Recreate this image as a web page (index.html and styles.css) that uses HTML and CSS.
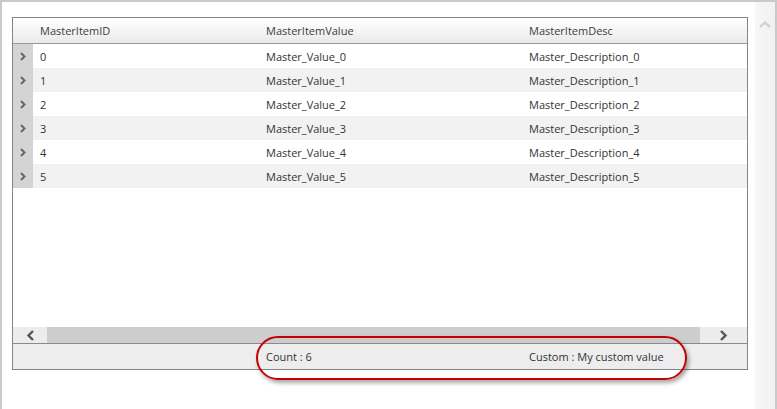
FILE: index.html
```html
<!DOCTYPE html>
<html lang="en">
<head>
    <meta charset="UTF-8">
    <title>Master Grid</title>
    <link rel="stylesheet" href="styles.css">
</head>
<body>
    <div class="window">
        <div class="content">
            <div class="grid">
                <div class="grid-header">
                    <div class="row-head"></div>
                    <div class="cell">MasterItemID</div>
                    <div class="cell">MasterItemValue</div>
                    <div class="cell">MasterItemDesc</div>
                </div>

                <div class="rows">
                    <div class="row">
                        <div class="row-head"><svg width="6" height="9" viewBox="0 0 6 9"><polyline points="1,1 4.5,4.5 1,8" /></svg></div>
                        <div class="cell">0</div>
                        <div class="cell">Master_Value_0</div>
                        <div class="cell">Master_Description_0</div>
                    </div>
                    <div class="row alt">
                        <div class="row-head"><svg width="6" height="9" viewBox="0 0 6 9"><polyline points="1,1 4.5,4.5 1,8" /></svg></div>
                        <div class="cell">1</div>
                        <div class="cell">Master_Value_1</div>
                        <div class="cell">Master_Description_1</div>
                    </div>
                    <div class="row">
                        <div class="row-head"><svg width="6" height="9" viewBox="0 0 6 9"><polyline points="1,1 4.5,4.5 1,8" /></svg></div>
                        <div class="cell">2</div>
                        <div class="cell">Master_Value_2</div>
                        <div class="cell">Master_Description_2</div>
                    </div>
                    <div class="row alt">
                        <div class="row-head"><svg width="6" height="9" viewBox="0 0 6 9"><polyline points="1,1 4.5,4.5 1,8" /></svg></div>
                        <div class="cell">3</div>
                        <div class="cell">Master_Value_3</div>
                        <div class="cell">Master_Description_3</div>
                    </div>
                    <div class="row">
                        <div class="row-head"><svg width="6" height="9" viewBox="0 0 6 9"><polyline points="1,1 4.5,4.5 1,8" /></svg></div>
                        <div class="cell">4</div>
                        <div class="cell">Master_Value_4</div>
                        <div class="cell">Master_Description_4</div>
                    </div>
                    <div class="row alt">
                        <div class="row-head"><svg width="6" height="9" viewBox="0 0 6 9"><polyline points="1,1 4.5,4.5 1,8" /></svg></div>
                        <div class="cell">5</div>
                        <div class="cell">Master_Value_5</div>
                        <div class="cell">Master_Description_5</div>
                    </div>
                </div>

                <div class="hscroll">
                    <div class="hs-btn left"><svg width="9" height="11" viewBox="0 0 9 11"><polyline points="7,1 2.5,5.5 7,10" /></svg></div>
                    <div class="hs-thumb"></div>
                    <div class="hs-btn right"><svg width="9" height="11" viewBox="0 0 9 11"><polyline points="2,1 6.5,5.5 2,10" /></svg></div>
                </div>

                <div class="grid-footer">
                    <div class="row-head"></div>
                    <div class="cell"></div>
                    <div class="cell">Count : 6</div>
                    <div class="cell">Custom : My custom value</div>
                </div>
            </div>

            <!-- highlight around the footer aggregates -->
            <div class="callout"></div>
        </div>

        <div class="vscroll">
            <svg width="14" height="9" viewBox="0 0 14 9"><polyline points="2,7 7,2.5 12,7" /></svg>
        </div>
    </div>
</body>
</html>
```

FILE: styles.css
```css
* {
    margin: 0;
    padding: 0;
    box-sizing: border-box;
}

body {
    font-family: "Open Sans", "Noto Sans", sans-serif;
    font-size: 11px;
    color: #333;
    background: #fff;
    width: 777px;
    height: 409px;
    overflow: hidden;
}

.window {
    display: flex;
    height: 409px;
    border-top: 2px solid #c9c9c9;
    border-left: 2px solid #c9c9c9;
    border-right: 2px solid #c9c9c9;
}

.content {
    position: relative;
    flex: 1;
    padding: 15px 7px 0 10px;
}

.grid {
    width: 736px;
    height: 353px;
    border: 1px solid #858585;
    display: flex;
    flex-direction: column;
    background: #fff;
}

.grid-header,
.row,
.grid-footer {
    display: grid;
    grid-template-columns: 20px 226px 263px 1fr;
    align-items: center;
}

.cell {
    padding-left: 7px;
    white-space: nowrap;
}

.grid-header {
    height: 26px;
    background: linear-gradient(to bottom, #ffffff 0%, #f3f3f3 60%, #e9e9e9 100%);
    border-bottom: 1px solid #9a9a9a;
    color: #3c3c3c;
}

.rows {
    flex: 1;
}

.row {
    height: 24px;
}

.row.alt {
    background: #f2f2f2;
}

.row .row-head {
    height: 100%;
    background: #d4d4d4;
    display: flex;
    align-items: center;
    justify-content: center;
}

.row-head svg polyline {
    fill: none;
    stroke: #666;
    stroke-width: 2;
}

.hscroll {
    display: flex;
    height: 16px;
    background: #ececec;
}

.hs-btn {
    width: 34px;
    display: flex;
    align-items: center;
    justify-content: center;
}

.hs-btn.right {
    width: 47px;
}

.hs-btn svg polyline {
    fill: none;
    stroke: #555;
    stroke-width: 2.4;
}

.hs-thumb {
    flex: 1;
    background: #cdcdcd;
}

.grid-footer {
    height: 26px;
    background: #ededed;
    border-top: 1px solid #8a8a8a;
}

.callout {
    position: absolute;
    left: 254px;
    top: 334px;
    width: 431px;
    height: 44px;
    border: 2px solid #c40000;
    border-radius: 22px;
    box-shadow: 2px 3px 4px rgba(0, 0, 0, 0.35);
}

.vscroll {
    width: 20px;
    background: linear-gradient(to right, #f7f7f7, #f1f1f1);
    display: flex;
    justify-content: center;
    padding-top: 18px;
}

.vscroll svg polyline {
    fill: none;
    stroke: #d2d2d2;
    stroke-width: 2.4;
}
```
